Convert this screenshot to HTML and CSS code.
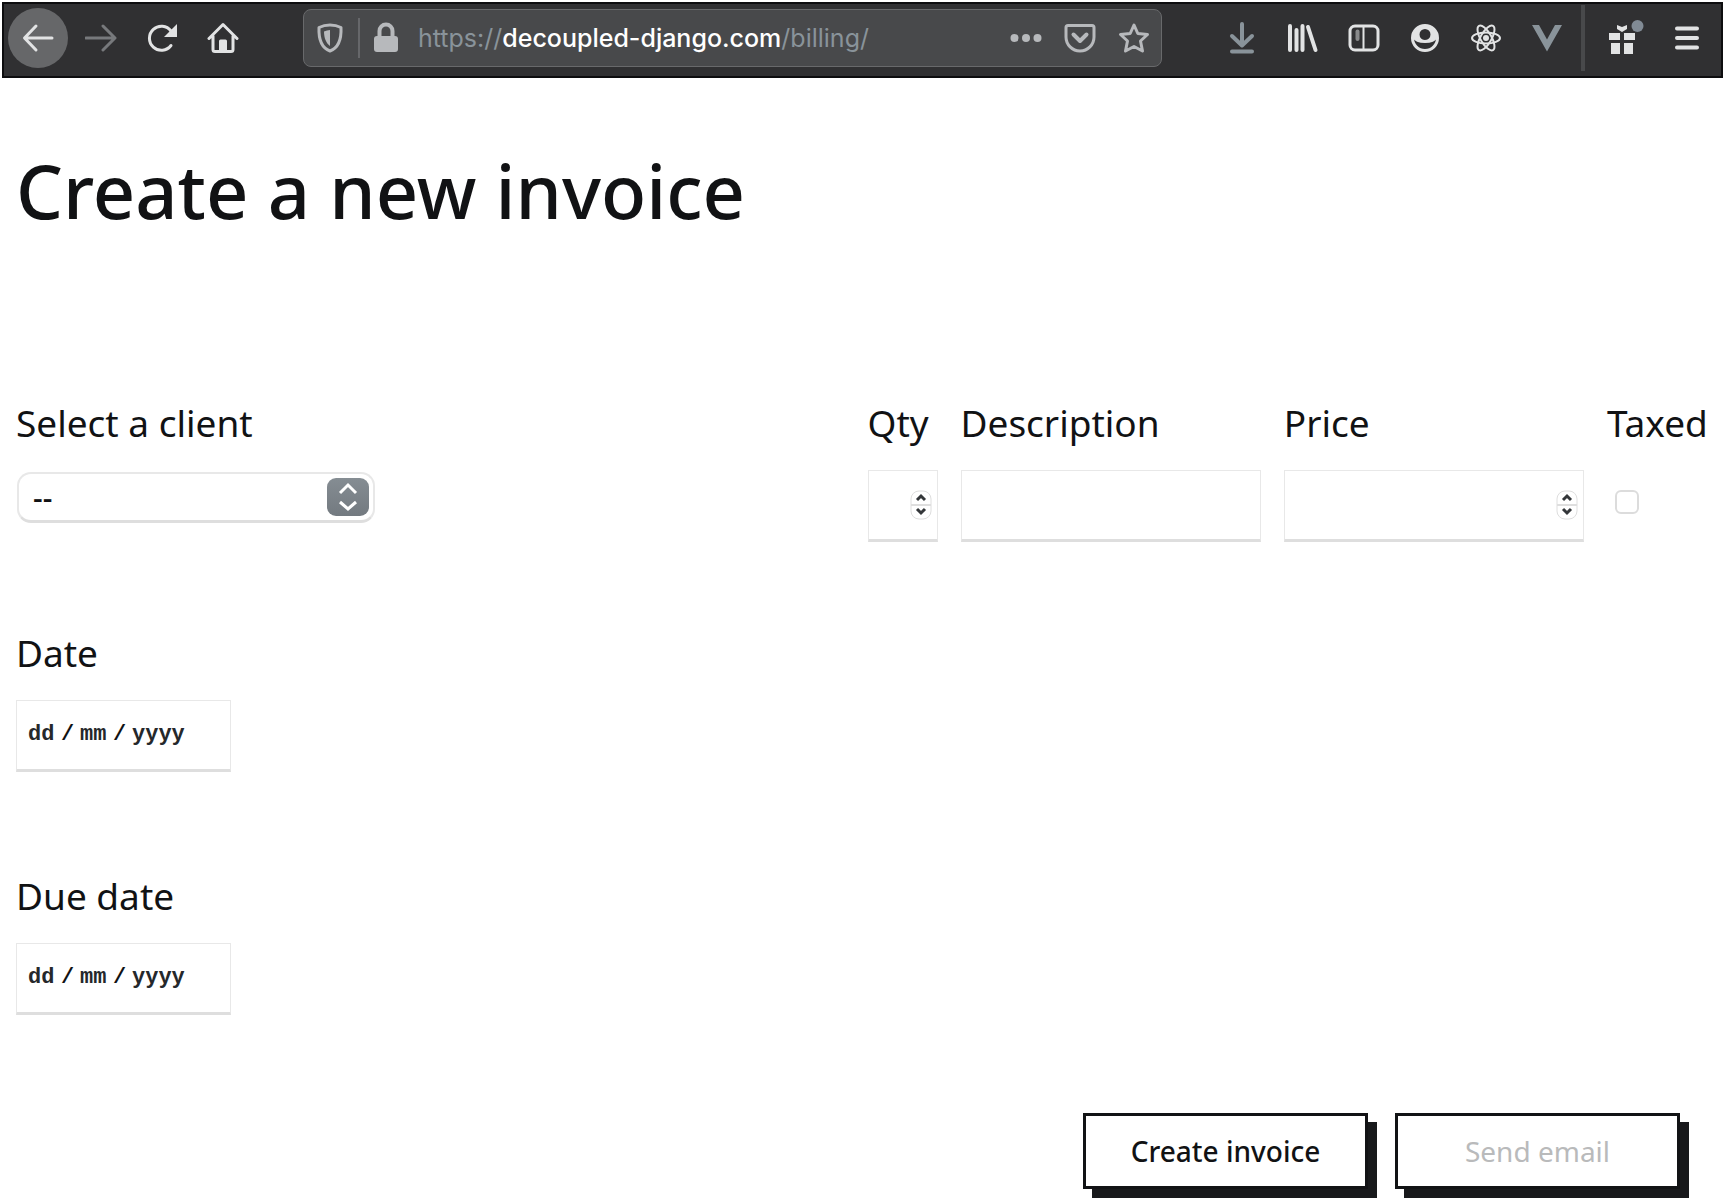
FILE: index.html
```html
<!DOCTYPE html>
<html lang="en">
<head>
<meta charset="utf-8">
<meta name="viewport" content="width=device-width, initial-scale=1">
<title>Create a new invoice</title>
<link rel="stylesheet" href="styles.css">
</head>
<body>
<header class="toolbar">
  <nav class="tools" aria-label="Navigation">
    <button class="tool tool-back" type="button" aria-label="Back">
      <svg class="icon" viewBox="0 0 32 32"><path d="M30 16H3M14 4L2.500 16L14 28"/></svg>
    </button>
    <button class="tool tool-muted" type="button" aria-label="Forward">
      <svg class="icon" viewBox="0 0 32 32"><path d="M1 16H29M18 4L30 16L18 28"/></svg>
    </button>
    <button class="tool" type="button" aria-label="Reload">
      <svg class="icon" viewBox="0 0 32 32"><path d="M25 23.500A12 12 0 1 1 25 9L27 12"/><path class="fill" d="M31 2V15H18Z"/></svg>
    </button>
    <button class="tool" type="button" aria-label="Home">
      <svg class="icon" viewBox="0 0 32 32"><path d="M2 16.500L16 2.500L30 16.500M6 14V27.500Q6 29.500 8 29.500H24Q26 29.500 26 27.500V14"/><path d="M13.500 29V19H18.500V29M16 19V29"/></svg>
    </button>
  </nav>
  <div class="urlbar">
    <svg class="icon" viewBox="0 0 32 32"><path d="M16 3C20 3 24 4 27 5.500C27.500 17 24 26 16 29C8 26 4.500 17 5 5.500C8 4 12 3 16 3Z"/><path class="fill" d="M16 8V24C12 21 10 16 10 9.500C12 8.500 14 8 16 8Z"/></svg>
    <span class="urlbar-rule"></span>
    <svg class="icon" viewBox="0 0 32 32"><path d="M9.500 15V9A6.500 6.500 0 0 1 22.500 9V15" stroke-width="4"/><rect class="fill" x="4" y="14" width="24" height="16" rx="3"/></svg>
    <p class="url">https://<span class="url-domain">decoupled-django.com</span>/billing/</p>
    <button class="tool tool-url" type="button" aria-label="Page actions">
      <svg class="icon" viewBox="0 0 32 32"><circle class="fill" cx="4.500" cy="16" r="4"/><circle class="fill" cx="16" cy="16" r="4"/><circle class="fill" cx="27.500" cy="16" r="4"/></svg>
    </button>
    <button class="tool tool-url" type="button" aria-label="Save to Pocket">
      <svg class="icon" viewBox="0 0 32 32"><path d="M4 3.500H28Q30 3.500 30 5.500V15A14 14 0 0 1 2 15V5.500Q2 3.500 4 3.500Z"/><path d="M9.500 12.500L16 19L22.500 12.500" stroke-width="4"/></svg>
    </button>
    <button class="tool tool-url" type="button" aria-label="Bookmark">
      <svg class="icon" viewBox="0 0 32 32"><path d="M16 3L19.800 11.500L29.500 12.500L22.500 19L24.500 29L16 24.500L7.500 29L9.500 19L2.500 12.500L12.200 11.500Z"/></svg>
    </button>
  </div>
  <nav class="tools" aria-label="Extensions">
    <button class="tool tool-blue" type="button" aria-label="Downloads">
      <svg class="icon icon-bold" viewBox="0 0 32 32"><path d="M16 2V22M6 14L16 23.500L26 14M6 29.500H26"/></svg>
    </button>
    <button class="tool" type="button" aria-label="Library">
      <svg class="icon icon-bold" viewBox="0 0 32 32"><path d="M3 4V28M9.500 8V28M15.500 4V28M21 5L28.500 28"/></svg>
    </button>
    <button class="tool" type="button" aria-label="Sidebars">
      <svg class="icon" viewBox="0 0 32 32"><rect x="2" y="4" width="28" height="24" rx="5"/><path d="M15.500 4V28" stroke-width="2"/><path d="M9.500 9.500V17" stroke-width="4" opacity="0.5"/></svg>
    </button>
    <button class="tool" type="button" aria-label="Account">
      <svg class="icon" viewBox="0 0 32 32"><circle cx="16" cy="16" r="12.500"/><path d="M5 15C8 21 24 21 27 15"/><path class="fill" fill-rule="evenodd" d="M16 3A13 10 0 0 1 28 14A13 9 0 0 1 4 14A13 10 0 0 1 16 3ZM16 7A5.500 5.500 0 0 0 16 18A5.500 5.500 0 0 0 16 7Z"/></svg>
    </button>
    <button class="tool" type="button" aria-label="React Developer Tools">
      <svg class="icon icon-thin" viewBox="0 0 32 32"><ellipse cx="16" cy="16" rx="14" ry="5.500"/><ellipse cx="16" cy="16" rx="14" ry="5.500" transform="rotate(60 16 16)"/><ellipse cx="16" cy="16" rx="14" ry="5.500" transform="rotate(120 16 16)"/><circle class="fill" cx="16" cy="16" r="3"/></svg>
    </button>
    <button class="tool tool-blue" type="button" aria-label="Vue Developer Tools">
      <svg class="icon" viewBox="0 0 32 32"><path class="fill" d="M1 3H8L16 17.500L24 3H31L16 29.500Z"/></svg>
    </button>
    <span class="tools-rule"></span>
    <button class="tool" type="button" aria-label="What's new">
      <svg class="icon icon-gift" viewBox="0 0 36 36"><path class="fill" d="M1 13H12V20H1ZM16 13H27V20H16ZM3 23H12V34H3ZM16 23H25V34H16ZM9 5L14 7L19 5L19 9L14 12L9 9Z"/><circle class="badge" cx="29.500" cy="6" r="6"/></svg>
    </button>
    <button class="tool" type="button" aria-label="Menu">
      <svg class="icon" viewBox="0 0 32 32"><path d="M6 6.500H26M6 16H26M6 25.500H26" stroke-width="4"/></svg>
    </button>
  </nav>
</header>

<main class="page">
  <h1 class="title">Create a new invoice</h1>
  <form class="invoice">
    <div class="columns">
      <div class="details">
        <div class="field">
          <label class="label" for="client">Select a client</label>
          <div class="select">
            <select class="select-input" id="client"><option>--</option></select>
            <svg class="select-arrows" viewBox="0 0 42 38"><path d="M13 15L21 7L29 15M13 24L21 31L29 24"/></svg>
          </div>
        </div>
        <div class="field">
          <label class="label" for="date-day">Date</label>
          <div class="box date">
            <input class="date-part" id="date-day" placeholder="dd">
            <span class="date-slash">/</span>
            <input class="date-part" aria-label="Month" placeholder="mm">
            <span class="date-slash">/</span>
            <input class="date-part date-year" aria-label="Year" placeholder="yyyy">
          </div>
        </div>
        <div class="field">
          <label class="label" for="due-day">Due date</label>
          <div class="box date">
            <input class="date-part" id="due-day" placeholder="dd">
            <span class="date-slash">/</span>
            <input class="date-part" aria-label="Due month" placeholder="mm">
            <span class="date-slash">/</span>
            <input class="date-part date-year" aria-label="Due year" placeholder="yyyy">
          </div>
        </div>
      </div>
      <div class="item">
        <div class="field">
          <label class="label" for="qty">Qty</label>
          <div class="box number">
            <input class="box-input" id="qty" type="number">
            <svg class="spinner" viewBox="0 0 22 30"><rect x="1" y="1" width="20" height="28" rx="8"/><path class="spinner-rule" d="M1 15H21"/><path class="spinner-arrow" d="M7 10L11 6L15 10M7 19L11 23L15 19"/></svg>
          </div>
        </div>
        <div class="field">
          <label class="label" for="description">Description</label>
          <div class="box"><input class="box-input" id="description" type="text"></div>
        </div>
        <div class="field">
          <label class="label" for="price">Price</label>
          <div class="box number">
            <input class="box-input" id="price" type="number">
            <svg class="spinner" viewBox="0 0 22 30"><rect x="1" y="1" width="20" height="28" rx="8"/><path class="spinner-rule" d="M1 15H21"/><path class="spinner-arrow" d="M7 10L11 6L15 10M7 19L11 23L15 19"/></svg>
          </div>
        </div>
        <div class="field">
          <label class="label" for="taxed">Taxed</label>
          <input class="check" id="taxed" type="checkbox">
        </div>
      </div>
    </div>
    <div class="actions">
      <button class="button" type="submit">Create invoice</button>
      <button class="button" type="button" disabled>Send email</button>
    </div>
  </form>
</main>
</body>
</html>
```
FILE: styles.css
```css
* {
  box-sizing: border-box;
}

body {
  margin: 0;
  background: #fff;
  color: #111214;
  font-family: "Noto Sans", "Open Sans", sans-serif;
}

button,
input,
select {
  margin: 0;
  padding: 0;
  border: 0;
  background: none;
  color: inherit;
  font: inherit;
}

/* Browser toolbar */

.toolbar {
  display: flex;
  align-items: center;
  height: 76px;
  margin: 2px 2px 0;
  padding: 0 4px 4px;
  border: 2px solid #0d0d0f;
  background: #303032;
}

.tools {
  display: flex;
  align-items: center;
}

.tool {
  display: flex;
  align-items: center;
  justify-content: center;
  width: 61px;
  height: 60px;
  color: #e2e3e4;
}

.tool-back {
  width: 60px;
  margin-right: 2px;
  border-radius: 50%;
  background: #666769;
}

.tool-muted {
  color: #77797c;
}

.tool-blue {
  color: #89939a;
}

.tool-url {
  width: 54px;
  color: #b7b9bc;
}

.tools-rule {
  width: 4px;
  height: 66px;
  margin: 0 10px 0 4px;
  background: #48494b;
}

.icon {
  flex: none;
  width: 32px;
  height: 32px;
  fill: none;
  stroke: currentColor;
  stroke-width: 3;
  stroke-linecap: round;
  stroke-linejoin: round;
}

.icon-thin {
  stroke-width: 2;
}

.icon-bold {
  stroke-width: 4;
}

.icon-gift {
  width: 36px;
  height: 36px;
}

.icon .fill {
  fill: currentColor;
  stroke: none;
}

.icon .badge {
  fill: #818b95;
  stroke: none;
}

.urlbar {
  display: flex;
  flex: 1;
  align-items: center;
  height: 58px;
  margin: 0 49px 0 50px;
  padding: 0 0 0 10px;
  border: 1px solid #68696b;
  border-radius: 8px;
  background: #48494b;
  color: #b7b9bc;
}

.urlbar-rule {
  width: 2px;
  height: 40px;
  margin: 0 10px 0 12px;
  background: #66676a;
}

.url {
  flex: 1;
  margin: 0 0 0 16px;
  color: #89939a;
  font: 25px/32px Inter, Roboto, sans-serif;
  white-space: nowrap;
}

.url-domain {
  color: #fff;
  font-weight: 500;
}

/* Invoice form */

.page {
  padding: 69px 16px 0;
}

.title {
  margin: 0 0 163px;
  font-size: 74px;
  font-weight: 500;
  line-height: 88px;
}

.columns {
  display: grid;
  grid-template-columns: 1fr 1fr;
  column-gap: 10px;
}

.details {
  display: flex;
  flex-direction: column;
  gap: 99px;
}

.item {
  display: grid;
  grid-template-columns: 70px 1fr 1fr 102px;
  align-items: start;
  column-gap: 23px;
}

.field {
  display: flex;
  flex-direction: column;
  align-items: stretch;
}

.label {
  margin-bottom: 22px;
  font-size: 37px;
  line-height: 50px;
  white-space: nowrap;
}

.box {
  display: flex;
  align-items: center;
  height: 72px;
  border: 1px solid #e8e8e8;
  border-bottom: 3px solid #dedede;
}

.box-input {
  flex: 1;
  width: 100%;
  min-width: 0;
  height: 100%;
  padding: 0 10px;
  font-size: 24px;
  appearance: textfield;
}

.number {
  padding-right: 5px;
}

.spinner {
  flex: none;
  width: 22px;
  height: 30px;
  fill: none;
  stroke: #dedede;
  stroke-width: 1;
}

.spinner-rule {
  stroke-width: 2;
}

.spinner-arrow {
  stroke: #34373a;
  stroke-width: 3;
}

.date {
  width: 215px;
  padding-left: 11px;
  font: bold 22px/28px "Liberation Mono", monospace;
}

.date-part {
  width: 27px;
}

.date-year {
  width: 54px;
}

.date-part::placeholder {
  color: #25282b;
  opacity: 1;
}

.date-slash {
  width: 25px;
  text-align: center;
}

.select {
  position: relative;
  width: 358px;
  margin: 2px 0 6px 1px;
}

.select-input {
  width: 100%;
  height: 51px;
  padding: 0 60px 0 14px;
  border: 2px solid #e8e8e8;
  border-bottom: 3px solid #dedede;
  border-radius: 14px;
  font-size: 30px;
  font-weight: 500;
  appearance: none;
}

.select-arrows {
  position: absolute;
  top: 6px;
  right: 6px;
  width: 42px;
  height: 38px;
  border-radius: 9px;
  background: linear-gradient(#858d93, #737a80);
  fill: none;
  stroke: #fff;
  stroke-width: 3;
  pointer-events: none;
}

.check {
  width: 24px;
  height: 24px;
  margin: 20px 0 0 8px;
  border: 2px solid #dcdcdc;
  border-radius: 6px;
  background: #fff;
  appearance: none;
}

.actions {
  display: flex;
  justify-content: flex-end;
  gap: 27px;
  padding: 98px 29px 13px 0;
}

.button {
  width: 285px;
  height: 76px;
  border: 3px solid #121315;
  background: #fff;
  box-shadow: 9px 9px 0 #18191b;
  font-size: 28px;
  font-weight: 500;
}

.button:disabled {
  color: #b9babb;
  font-weight: 400;
}
```
